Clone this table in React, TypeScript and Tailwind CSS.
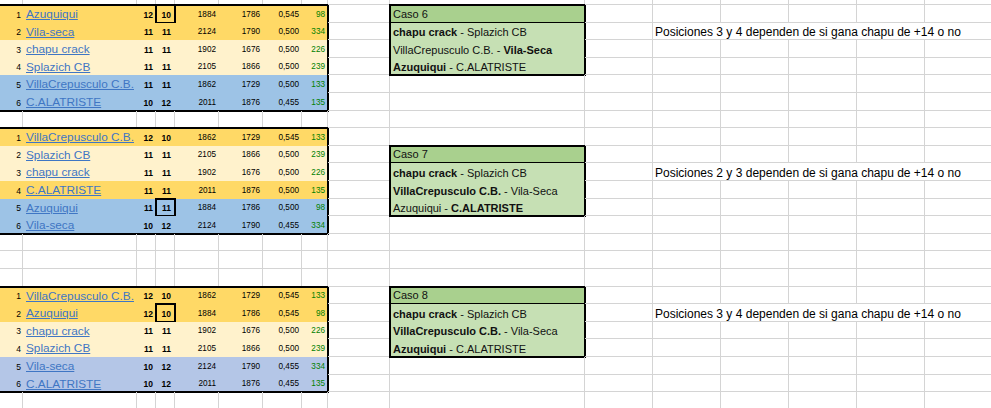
type Team = {
  n: number;
  name: string;
  w: string;
  l: string;
  e: string;
  f: string;
  g: string;
  h: string;
  bg: string;
  box?: boolean;
};

const GOLD = "bg-[#ffd966]";
const CREAM = "bg-[#fff2cc]";
const BLUE = "bg-[#9dc3e6]";
const LAV = "bg-[#b4c6e7]";

// row heights of the sheet, first one is the cut-off row at the top
const H = [5, 18, 17, 18, 17, 18, 18, 17, 18, 17, 18, 18, 17, 18, 17, 18, 18, 17, 18, 17, 18, 18, 17, 18];

const hc = (h: number) => (h === 5 ? "h-[5px]" : h === 17 ? "h-[17px]" : "h-[18px]");

const AH = ["w-[26px]", "w-[114px]", "w-[19px]", "w-[19px]", "w-[44px]", "w-[44px]", "w-[39px]", "w-[26px]"];
const LP = ["w-[68px]", "w-[68px]", "w-[68px]", "w-[68px]", "w-[68px]"];

const t1: Team[] = [
  { n: 1, name: "Azuquiqui", w: "12", l: "10", e: "1884", f: "1786", g: "0,545", h: "98", bg: GOLD, box: true },
  { n: 2, name: "Vila-seca", w: "11", l: "11", e: "2124", f: "1790", g: "0,500", h: "334", bg: GOLD },
  { n: 3, name: "chapu crack", w: "11", l: "11", e: "1902", f: "1676", g: "0,500", h: "226", bg: CREAM },
  { n: 4, name: "Splazich CB", w: "11", l: "11", e: "2105", f: "1866", g: "0,500", h: "239", bg: CREAM },
  { n: 5, name: "VillaCrepusculo C.B.", w: "11", l: "11", e: "1862", f: "1729", g: "0,500", h: "133", bg: BLUE },
  { n: 6, name: "C.ALATRISTE", w: "10", l: "12", e: "2011", f: "1876", g: "0,455", h: "135", bg: BLUE },
];

const t2: Team[] = [
  { n: 1, name: "VillaCrepusculo C.B.", w: "12", l: "10", e: "1862", f: "1729", g: "0,545", h: "133", bg: GOLD },
  { n: 2, name: "Splazich CB", w: "11", l: "11", e: "2105", f: "1866", g: "0,500", h: "239", bg: CREAM },
  { n: 3, name: "chapu crack", w: "11", l: "11", e: "1902", f: "1676", g: "0,500", h: "226", bg: CREAM },
  { n: 4, name: "C.ALATRISTE", w: "11", l: "11", e: "2011", f: "1876", g: "0,500", h: "135", bg: GOLD },
  { n: 5, name: "Azuquiqui", w: "11", l: "11", e: "1884", f: "1786", g: "0,500", h: "98", bg: BLUE, box: true },
  { n: 6, name: "Vila-seca", w: "10", l: "12", e: "2124", f: "1790", g: "0,455", h: "334", bg: BLUE },
];

const t3: Team[] = [
  { n: 1, name: "VillaCrepusculo C.B.", w: "12", l: "10", e: "1862", f: "1729", g: "0,545", h: "133", bg: GOLD },
  { n: 2, name: "Azuquiqui", w: "12", l: "10", e: "1884", f: "1786", g: "0,545", h: "98", bg: GOLD, box: true },
  { n: 3, name: "chapu crack", w: "11", l: "11", e: "1902", f: "1676", g: "0,500", h: "226", bg: CREAM },
  { n: 4, name: "Splazich CB", w: "11", l: "11", e: "2105", f: "1866", g: "0,500", h: "239", bg: CREAM },
  { n: 5, name: "Vila-seca", w: "10", l: "12", e: "2124", f: "1790", g: "0,455", h: "334", bg: LAV },
  { n: 6, name: "C.ALATRISTE", w: "10", l: "12", e: "2011", f: "1876", g: "0,455", h: "135", bg: LAV },
];

type Part = { t: string; b?: boolean };
type Caso = { title: string; lines: Part[][] };

const caso6: Caso = {
  title: "Caso 6",
  lines: [
    [{ t: "chapu crack", b: true }, { t: " - Splazich CB" }],
    [{ t: "VillaCrepusculo C.B. - " }, { t: "Vila-Seca", b: true }],
    [{ t: "Azuquiqui", b: true }, { t: " - C.ALATRISTE" }],
  ],
};
const caso7: Caso = {
  title: "Caso 7",
  lines: [
    [{ t: "chapu crack", b: true }, { t: " - Splazich CB" }],
    [{ t: "VillaCrepusculo C.B.", b: true }, { t: " - Vila-Seca" }],
    [{ t: "Azuquiqui - " }, { t: "C.ALATRISTE", b: true }],
  ],
};
const caso8: Caso = {
  title: "Caso 8",
  lines: [
    [{ t: "chapu crack", b: true }, { t: " - Splazich CB" }],
    [{ t: "VillaCrepusculo C.B.", b: true }, { t: " - Vila-Seca" }],
    [{ t: "Azuquiqui", b: true }, { t: " - C.ALATRISTE" }],
  ],
};

function GridRow({ widths, h }: { widths: string[]; h: number }) {
  return (
    <div className={`flex shrink-0 ${hc(h)}`}>
      {widths.map((w, i) => (
        <div key={i} className={`${w} h-full shrink-0 border-r border-b border-[#d4d4d4]`} />
      ))}
    </div>
  );
}

function GridRange({ widths, from, to }: { widths: string[]; from: number; to: number }) {
  const rows = [];
  for (let i = from; i <= to; i++) rows.push(<GridRow key={i} widths={widths} h={H[i]} />);
  return <>{rows}</>;
}

function Table({ rows, start }: { rows: Team[]; start: number }) {
  const num = "flex items-center justify-end pt-[2px] shrink-0";
  return (
    <div className="flex flex-col shrink-0 outline-2 outline-black -outline-offset-1">
      {rows.map((r, i) => (
        <div key={r.n} className={`flex shrink-0 ${hc(H[start + i])} ${r.bg} leading-none text-black`}>
          <div className={`w-[26px] pr-[2px] text-[8.5px] ${num}`}>{r.n}</div>
          <div className="w-[114px] shrink-0 flex items-center pl-[3px] pt-[2px] text-[11.8px] text-[#3f76c4] underline underline-offset-[1px] whitespace-nowrap">
            {r.name}
          </div>
          <div className={`w-[19px] pr-[3px] text-[8.5px] font-bold ${num}`}>{r.w}</div>
          <div
            className={`w-[19px] pr-[4px] text-[8.5px] font-bold ${num} ${
              r.box ? "outline-2 outline-black -outline-offset-1" : ""
            }`}
          >
            {r.l}
          </div>
          <div className={`w-[44px] pr-[3px] text-[8.2px] ${num}`}>{r.e}</div>
          <div className={`w-[44px] pr-[3px] text-[8.2px] ${num}`}>{r.f}</div>
          <div className={`w-[39px] pr-[3px] text-[8.2px] ${num}`}>{r.g}</div>
          <div className={`w-[26px] pr-[3px] text-[8.2px] text-[#008000] ${num}`}>{r.h}</div>
        </div>
      ))}
    </div>
  );
}

function CasoBox({ caso, start }: { caso: Caso; start: number }) {
  return (
    <div className="flex flex-col shrink-0 outline-2 outline-black -outline-offset-1 text-[11px] leading-none text-[#111]">
      <div className={`${hc(H[start])} shrink-0 flex items-center pl-[3px] pt-[1px] bg-[#a9d08e] border-b border-black`}>
        {caso.title}
      </div>
      {caso.lines.map((line, i) => (
        <div key={i} className={`${hc(H[start + 1 + i])} shrink-0 flex items-center pl-[3px] pt-[2px] bg-[#c6e0b4] whitespace-pre`}>
          {line.map((p, j) => (
            <span key={j} className={p.b ? "font-bold" : ""}>
              {p.t}
            </span>
          ))}
        </div>
      ))}
    </div>
  );
}

function NoteRow({ h, text }: { h: number; text: string }) {
  return (
    <div className={`flex shrink-0 ${hc(h)}`}>
      <div className="w-[340px] h-full shrink-0 border-b border-[#d4d4d4] flex items-center pl-[2px] pt-[2px] text-[12px] leading-none text-black whitespace-nowrap">
        {text}
      </div>
    </div>
  );
}

const notes: Record<number, string> = {
  2: "Posiciones 3 y 4 dependen de si gana chapu de +14 o no",
  10: "Posiciones 2 y 3 dependen de si gana chapu de +14 o no",
  18: "Posiciones 3 y 4 dependen de si gana chapu de +14 o no",
};

export default function App() {
  return (
    <div className="w-[991px] h-[408px] overflow-hidden bg-white font-['Liberation_Sans',Arial,sans-serif]">
      <div className="flex">
        {/* A..H: the three standings tables */}
        <div className="flex flex-col -ml-[3px] w-[331px] shrink-0">
          <GridRange widths={AH} from={0} to={0} />
          <Table rows={t1} start={1} />
          <GridRange widths={AH} from={7} to={7} />
          <Table rows={t2} start={8} />
          <GridRange widths={AH} from={14} to={16} />
          <Table rows={t3} start={17} />
          <GridRange widths={AH} from={23} to={23} />
        </div>

        {/* I: empty column */}
        <div className="flex flex-col w-[62px] shrink-0">
          <GridRange widths={["w-[62px]"]} from={0} to={23} />
        </div>

        {/* J: case boxes */}
        <div className="flex flex-col w-[195px] shrink-0">
          <GridRange widths={["w-[195px]"]} from={0} to={0} />
          <CasoBox caso={caso6} start={1} />
          <GridRange widths={["w-[195px]"]} from={5} to={8} />
          <CasoBox caso={caso7} start={9} />
          <GridRange widths={["w-[195px]"]} from={13} to={16} />
          <CasoBox caso={caso8} start={17} />
          <GridRange widths={["w-[195px]"]} from={21} to={23} />
        </div>

        {/* K */}
        <div className="flex flex-col w-[68px] shrink-0">
          <GridRange widths={["w-[68px]"]} from={0} to={23} />
        </div>

        {/* L..P with the notes */}
        <div className="flex flex-col w-[340px] shrink-0">
          {H.map((h, i) =>
            notes[i] ? <NoteRow key={i} h={h} text={notes[i]} /> : <GridRow key={i} widths={LP} h={h} />
          )}
        </div>
      </div>
    </div>
  );
}
